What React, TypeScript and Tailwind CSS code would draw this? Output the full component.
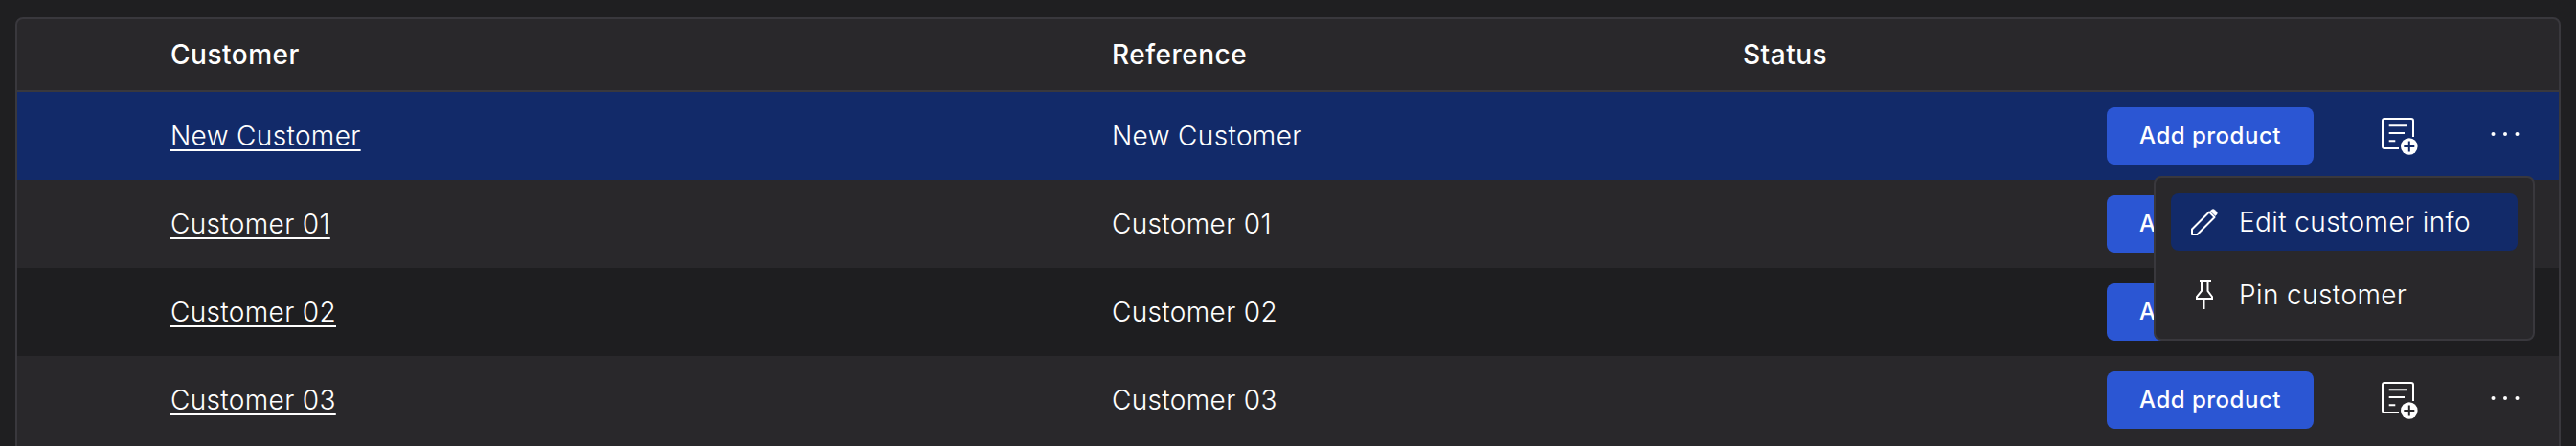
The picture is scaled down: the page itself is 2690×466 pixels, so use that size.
import React from "react";

const rows = [
  { name: "New Customer", bg: "bg-[#122a69]", plus: "#122a69" },
  { name: "Customer 01", bg: "bg-[#29282b]", plus: "#29282b" },
  { name: "Customer 02", bg: "bg-[#1e1e20]", plus: "#1e1e20" },
  { name: "Customer 03", bg: "bg-[#29282b]", plus: "#29282b" },
];

function NoteIcon({ plus }: { plus: string }) {
  return (
    <svg width="38" height="39" viewBox="0 0 38 39" fill="none" className="block text-white">
      <path d="M18 32H3A2 2 0 0 1 1 30V3A2 2 0 0 1 3 1H31A2 2 0 0 1 33 3V20" stroke="currentColor" strokeWidth="2" />
      <path d="M7.700 8.300H26M7.700 16H24M7.700 24.300H14.300" stroke="currentColor" strokeWidth="2" />
      <circle cx="28.800" cy="30" r="8.800" fill="currentColor" />
      <path d="M28.800 24.500V35.500M23.300 30H34.300" stroke={plus} strokeWidth="2" />
    </svg>
  );
}

function Dots() {
  return (
    <svg width="30" height="6" viewBox="0 0 30 6" className="block text-white">
      <circle cx="2.500" cy="3" r="2" fill="currentColor" />
      <circle cx="15" cy="3" r="2" fill="currentColor" />
      <circle cx="27.500" cy="3" r="2" fill="currentColor" />
    </svg>
  );
}

function Pencil() {
  return (
    <svg width="28" height="28" viewBox="0 0 28 28" fill="none" stroke="currentColor" strokeWidth="2" strokeLinejoin="round" className="shrink-0">
      <path d="M1 27V21.500L19 3.500L24.500 9L6.500 27H1Z" />
      <path d="M21 1.500Q23 0 24.500 1L27 3.500Q28 5 26.500 6.500L25.500 7.500L20 2.500Z" fill="currentColor" strokeWidth="0.500" />
    </svg>
  );
}

function Pin() {
  return (
    <svg width="18" height="30" viewBox="0 0 18 30" fill="none" stroke="currentColor" strokeWidth="2" className="shrink-0">
      <path d="M4 1H16M6 1V11L1 17V19H17V17L12.500 11V1" />
      <path d="M8.500 19V30" />
    </svg>
  );
}

export default function App() {
  return (
    <div className="w-[2690px] h-[466px] overflow-hidden bg-[#1f1f21] pt-[18px] px-4 text-white font-['Inter',sans-serif]">
      <div className="relative w-[2658px] h-[470px] rounded-lg border-2 border-[#39383d] bg-[#29282b]">
        <div className="flex h-[76px] items-center border-b-2 border-[#39383d] text-[28px] font-medium tracking-[0.5px]">
          <div className="w-[1143px] pl-[160px]">Customer</div>
          <div className="w-[659px]">Reference</div>
          <div>Status</div>
        </div>
        {rows.map((r) => (
          <div key={r.name} className={`flex h-[92px] items-center text-[28px] font-light tracking-[0.35px] ${r.bg}`}>
            <div className="w-[1143px] pl-[160px]">
              <a className="underline underline-offset-4 decoration-2">{r.name}</a>
            </div>
            <div className="w-[659px]">{r.name}</div>
            <div className="w-[380px]" />
            <button className="w-[216px] h-[60px] rounded-lg bg-[#2b56d3] text-[24px] font-medium tracking-[0.5px]">Add product</button>
            <div className="ml-[71px]"><NoteIcon plus={r.plus} /></div>
            <div className="ml-[76px] -mt-1"><Dots /></div>
          </div>
        ))}
        <div className="absolute left-[2231px] top-[164px] w-[398px] h-[172px] rounded-lg border-2 border-[#39383d] bg-[#29282b] p-4 text-[28px] font-light tracking-[0.4px]">
          <div className="flex h-[60px] items-center rounded-lg bg-[#122a69] pl-[21px]">
            <Pencil />
            <span className="ml-[22px]">Edit customer info</span>
          </div>
          <div className="flex h-[60px] mt-4 items-center pl-[26px]">
            <Pin />
            <span className="ml-[27px]">Pin customer</span>
          </div>
        </div>
      </div>
    </div>
  );
}
